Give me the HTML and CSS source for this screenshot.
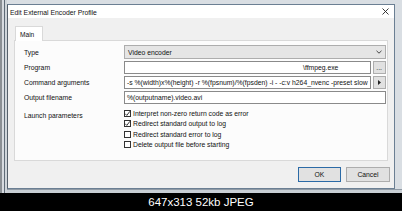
FILE: index.html
```html
<!DOCTYPE html>
<html>
<head>
<meta charset="utf-8">
<link rel="stylesheet" href="styles.css">
</head>
<body>
<div class="screen">
  <div class="dialog">
    <div class="titlebar">
      <span class="title">Edit External Encoder Profile</span>
      <svg class="close" width="7" height="7" viewBox="0 0 7 7"><path d="M0.5 0.5L6.5 6.5M6.5 0.5L0.5 6.5" stroke="#222" stroke-width="0.9" fill="none"/></svg>
    </div>
    <div class="client">
      <div class="tabs"><div class="tab">Main</div></div>
      <div class="panel">
        <div class="form">
          <div class="label">Type</div>
          <div class="combo"><span>Video encoder</span>
            <svg class="chev" width="6" height="4" viewBox="0 0 6 4"><path d="M0.5 0.8L3 3.2L5.5 0.8" stroke="#333" stroke-width="0.9" fill="none"/></svg>
          </div>
          <div class="label">Program</div>
          <div class="pair">
            <div class="field prog"><span>\ffmpeg.exe</span></div>
            <div class="sbtn">...</div>
          </div>
          <div class="label">Command arguments</div>
          <div class="pair">
            <div class="field"><span>-s %(width)x%(height) -r %(fpsnum)/%(fpsden) -i - -c:v h264_nvenc -preset slow</span></div>
            <div class="sbtn"><svg width="3" height="5" viewBox="0 0 3 5"><path d="M0 0L3 2.5L0 5Z" fill="#222"/></svg></div>
          </div>
          <div class="label">Output filename</div>
          <div class="field"><span>%(outputname).video.avi</span></div>
          <div class="label launch">Launch parameters</div>
          <div class="checks">
            <div class="check"><span class="box on"><svg width="7" height="7" viewBox="0 0 7 7"><path d="M1 3.6L2.8 5.4L6 1.2" stroke="#222" stroke-width="0.9" fill="none"/></svg></span>Interpret non-zero return code as error</div>
            <div class="check"><span class="box on"><svg width="7" height="7" viewBox="0 0 7 7"><path d="M1 3.6L2.8 5.4L6 1.2" stroke="#222" stroke-width="0.9" fill="none"/></svg></span>Redirect standard output to log</div>
            <div class="check"><span class="box"></span>Redirect standard error to log</div>
            <div class="check"><span class="box"></span>Delete output file before starting</div>
          </div>
        </div>
      </div>
      <div class="buttons">
        <div class="btn default">OK</div>
        <div class="btn">Cancel</div>
      </div>
    </div>
  </div>
  <div class="under"></div>
</div>
<div class="caption">647x313 52kb JPEG</div>
</body>
</html>
```

FILE: styles.css
```css
html, body {
  margin: 0;
  padding: 0;
}
body {
  width: 402px;
  height: 211px;
  overflow: hidden;
  background: #000;
  font-family: "Liberation Sans", Arial, sans-serif;
}
.screen {
  height: 193px;
  box-sizing: border-box;
  padding: 4px 0 0 7px;
  display: flex;
  flex-direction: column;
  background:
    linear-gradient(90deg, #8a8f94 0, #8a8f94 2px, #d7dbe0 2px, #d7dbe0 4px, #5f6b77 4px, #5f6b77 5px, #cfd5da 5px, #cfd5da 7px, transparent 7px),
    #d9dee3;
}
.dialog {
  width: 388px;
  height: 185px;
  box-sizing: border-box;
  border: 1px solid #6b7f93;
  border-left-color: #55606b;
  background: #f0f0f0;
  display: flex;
  flex-direction: column;
}
.titlebar {
  height: 13px;
  background: #fff;
  display: flex;
  align-items: center;
  padding: 0 5px 0 2px;
}
.title {
  font-size: 6.8px;
  color: #111;
  flex: 1;
  position: relative;
  top: 1px;
}
.client {
  flex: 1;
  padding: 7px 5px 0 6px;
  display: flex;
  flex-direction: column;
}
.tabs {
  display: flex;
  height: 15px;
  padding-left: 1px;
}
.tab {
  width: 28px;
  box-sizing: border-box;
  border: 1px solid #d9d9d9;
  border-bottom: none;
  background: #fff;
  font-size: 6.6px;
  color: #111;
  padding: 4px 0 0 4px;
  position: relative;
  top: 1px;
}
.panel {
  width: 374px;
  height: 121px;
  box-sizing: border-box;
  border: 1px solid #d9d9d9;
  background: #fcfcfc;
  padding: 4px 6px 0 9px;
}
.form {
  display: grid;
  grid-template-columns: 100px 1fr;
  grid-template-rows: 14px 13px 13px 13px auto;
  row-gap: 2px;
  font-size: 6.8px;
  color: #111;
}
.label {
  display: flex;
  align-items: center;
}
.label.launch {
  align-items: flex-start;
  padding-top: 6px;
}
.combo {
  box-sizing: border-box;
  border: 1px solid #adadad;
  background: #e5e5e5;
  display: flex;
  align-items: center;
  padding: 0 2px 0 3px;
}
.combo span {
  flex: 1;
}
.chev {
  margin-right: 1px;
}
.pair {
  display: flex;
  gap: 2px;
}
.field {
  flex: 1;
  min-width: 0;
  box-sizing: border-box;
  border: 1px solid #8a8a8a;
  background: #fff;
  display: flex;
  align-items: center;
  padding: 0 2px;
  overflow: hidden;
  white-space: nowrap;
}
.field.prog {
  padding-left: 178px;
}
.sbtn {
  width: 13px;
  box-sizing: border-box;
  border: 1px solid #adadad;
  background: #e1e1e1;
  display: flex;
  align-items: center;
  justify-content: center;
  font-size: 7px;
  color: #222;
  line-height: 1;
}
.checks {
  padding-top: 2px;
  display: flex;
  flex-direction: column;
}
.check {
  height: 10.5px;
  display: flex;
  align-items: center;
  gap: 2px;
  white-space: nowrap;
}
.box {
  width: 7px;
  height: 7px;
  box-sizing: border-box;
  border: 1px solid #333;
  background: #fff;
  position: relative;
}
.box svg {
  position: absolute;
  left: -1px;
  top: -1px;
}
.buttons {
  display: flex;
  justify-content: flex-end;
  gap: 5px;
  margin-top: 6px;
  margin-right: -1px;
}
.btn {
  width: 44px;
  height: 15px;
  box-sizing: border-box;
  border: 1px solid #adadad;
  background: #e1e1e1;
  font-size: 6.8px;
  color: #111;
  display: flex;
  align-items: center;
  justify-content: center;
}
.btn.default {
  width: 43px;
  border: 1.5px solid #2b6aa6;
}
.under {
  flex: 1;
  background: #c9cfd5;
  border-top: 1px solid #8f9aa5;
}
.caption {
  height: 18px;
  color: #fff;
  font-size: 11.5px;
  text-align: center;
  line-height: 18px;
}
```
